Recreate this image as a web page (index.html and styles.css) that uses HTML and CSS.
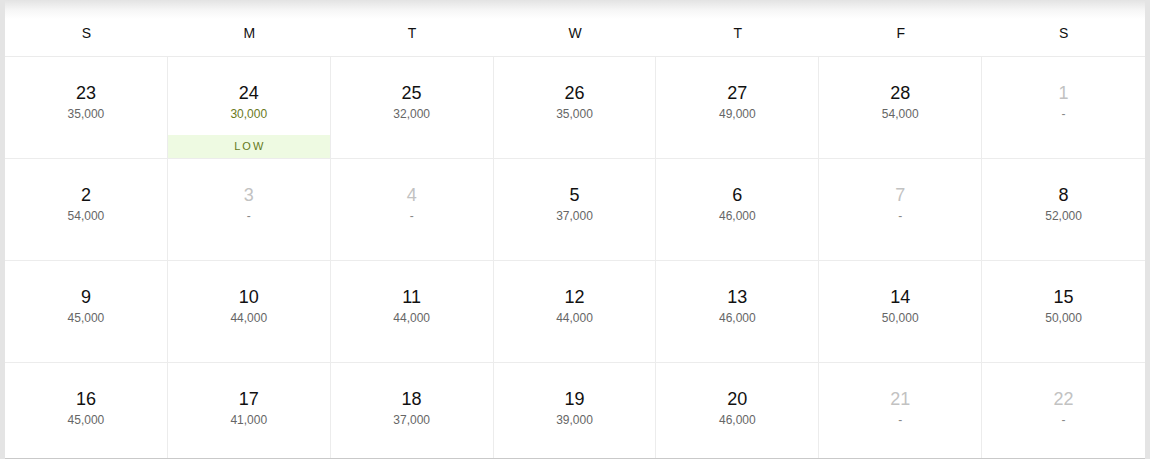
FILE: index.html
```html
<!DOCTYPE html>
<html lang="en">
<head>
<meta charset="utf-8">
<title>Calendar</title>
<link rel="stylesheet" href="styles.css">
</head>
<body>
<div class="calendar">
  <div class="weekdays">
    <div class="wd">S</div><div class="wd">M</div><div class="wd">T</div><div class="wd">W</div><div class="wd">T</div><div class="wd">F</div><div class="wd">S</div>
  </div>
  <div class="grid">
    <div class="cell"><div class="num">23</div><div class="price">35,000</div></div>
    <div class="cell low"><div class="num">24</div><div class="price">30,000</div><div class="badge">LOW</div></div>
    <div class="cell"><div class="num">25</div><div class="price">32,000</div></div>
    <div class="cell"><div class="num">26</div><div class="price">35,000</div></div>
    <div class="cell"><div class="num">27</div><div class="price">49,000</div></div>
    <div class="cell"><div class="num">28</div><div class="price">54,000</div></div>
    <div class="cell off"><div class="num">1</div><div class="price">-</div></div>

    <div class="cell"><div class="num">2</div><div class="price">54,000</div></div>
    <div class="cell off"><div class="num">3</div><div class="price">-</div></div>
    <div class="cell off"><div class="num">4</div><div class="price">-</div></div>
    <div class="cell"><div class="num">5</div><div class="price">37,000</div></div>
    <div class="cell"><div class="num">6</div><div class="price">46,000</div></div>
    <div class="cell off"><div class="num">7</div><div class="price">-</div></div>
    <div class="cell"><div class="num">8</div><div class="price">52,000</div></div>

    <div class="cell"><div class="num">9</div><div class="price">45,000</div></div>
    <div class="cell"><div class="num">10</div><div class="price">44,000</div></div>
    <div class="cell"><div class="num">11</div><div class="price">44,000</div></div>
    <div class="cell"><div class="num">12</div><div class="price">44,000</div></div>
    <div class="cell"><div class="num">13</div><div class="price">46,000</div></div>
    <div class="cell"><div class="num">14</div><div class="price">50,000</div></div>
    <div class="cell"><div class="num">15</div><div class="price">50,000</div></div>

    <div class="cell"><div class="num">16</div><div class="price">45,000</div></div>
    <div class="cell"><div class="num">17</div><div class="price">41,000</div></div>
    <div class="cell"><div class="num">18</div><div class="price">37,000</div></div>
    <div class="cell"><div class="num">19</div><div class="price">39,000</div></div>
    <div class="cell"><div class="num">20</div><div class="price">46,000</div></div>
    <div class="cell off"><div class="num">21</div><div class="price">-</div></div>
    <div class="cell off"><div class="num">22</div><div class="price">-</div></div>
  </div>
</div>
</body>
</html>
```

FILE: styles.css
```css
* { box-sizing: border-box; }

html, body {
  margin: 0;
  padding: 0;
  background: #e4e4e4;
  font-family: "Liberation Sans", Arial, sans-serif;
}

.calendar {
  margin: 0 5px;
  height: 459px;
  background: #fff;
  border-bottom: 1px solid #c9c9c9;
  overflow: hidden;
}

.weekdays {
  display: grid;
  grid-template-columns: repeat(7, 1fr);
  height: 57px;
  padding-top: 23px;
  border-bottom: 1px solid #ebebeb;
  background: linear-gradient(to bottom, #e3e3e3 0px, #f6f6f6 10px, #ffffff 19px);
}

.wd {
  text-align: center;
  font-size: 14px;
  line-height: 20px;
  color: #111;
}

.grid {
  display: grid;
  grid-template-columns: repeat(7, 1fr);
  grid-auto-rows: 102px;
}

.cell {
  display: flex;
  flex-direction: column;
  align-items: stretch;
  padding-top: 24px;
  border-right: 1px solid #ececec;
  border-bottom: 1px solid #ececec;
  text-align: center;
}

.cell:nth-child(7n) {
  border-right: none;
}

.num {
  font-size: 18px;
  line-height: 25px;
  color: #111;
}

.price {
  font-size: 12px;
  line-height: 17px;
  color: #666;
}

.off .num {
  color: #c2c2c2;
}

.off .price {
  color: #888;
}

.low .price {
  color: #6a7a1c;
}

.badge {
  margin-top: auto;
  height: 23px;
  line-height: 23px;
  background: #eefae2;
  color: #65791a;
  font-size: 11px;
  letter-spacing: 2px;
  padding-left: 2px;
}
```
